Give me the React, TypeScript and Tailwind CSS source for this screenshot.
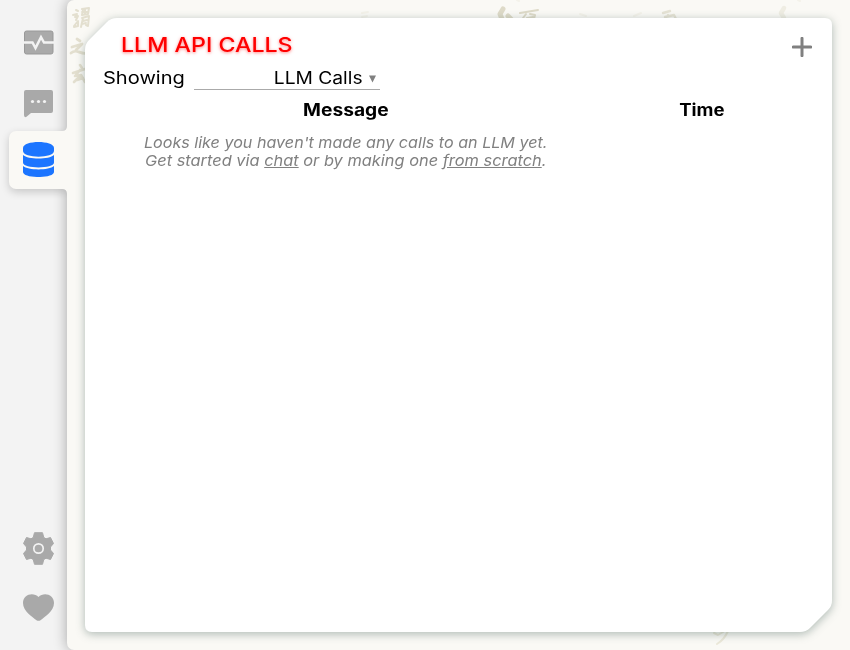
import type { ReactNode } from "react";

function Stretch({ className, children }: { className: string; children: ReactNode }) {
  return <span className={`inline-block whitespace-nowrap ${className}`}>{children}</span>;
}

function Sidebar() {
  return (
    <nav className="flex h-full w-[67px] shrink-0 flex-col text-[#a9a9a9]">
      <div className="flex h-[131px] flex-col pl-[23px] pt-[30px]">
        <svg className="h-[26px] w-[31px]" viewBox="0 0 31 26">
          <rect x="1.5" y="1" width="28.5" height="23" rx="2" fill="#aaa" stroke="#999" />
          <path d="M0 12.5H9.5L12.5 18L18 7.2L21 12.5H31" fill="none" stroke="#f3f3f3" strokeWidth="2.5" />
        </svg>
        <svg className="mt-[34px] h-[28px] w-[31px]" viewBox="0 0 31 28">
          <path d="M3 0H28Q30 0 30 2V21Q30 23 28 23H8L3.5 26.8Q1 28 1 25V2Q1 0 3 0Z" fill="currentColor" />
          <g fill="#f3f3f3"><circle cx="9.5" cy="11.5" r="1.6" /><circle cx="15.5" cy="11.5" r="1.6" /><circle cx="21.5" cy="11.5" r="1.6" /></g>
        </svg>
      </div>
      <div className="relative z-10 ml-[9px] h-[58px] w-[58px]">
        <div className="absolute inset-0 rounded-l-[7px] bg-[#faf9f5] shadow-[0_3px_8px_rgba(0,0,0,0.18)] [clip-path:inset(-12px_0_-14px_-14px)]" />
        <svg className="absolute -top-[5px] right-0 h-[5px] w-[5px]" viewBox="0 0 5 5"><path d="M5 0Q5 5 0 5H5Z" fill="#faf9f5" /></svg>
        <svg className="absolute -bottom-[5px] right-0 h-[5px] w-[5px]" viewBox="0 0 5 5"><path d="M0 0Q5 0 5 5V0Z" fill="#faf9f5" /></svg>
        <svg className="relative ml-[14px] mt-[11px] h-[35px] w-[31px]" viewBox="0 0 31 35" fill="#1c75ff">
          <path d="M0 6C0-2 31-2 31 6V9C31 16.5 0 16.5 0 9Z" />
          <path d="M0 13C5 17.8 26 17.8 31 13V20.5C31 27 0 27 0 20.5Z" />
          <path d="M0 24C5 28.5 26 28.5 31 24V30C31 36.7 0 36.7 0 30Z" />
        </svg>
      </div>
      <div className="mt-auto flex flex-col pb-[29px] pl-[23px]">
        <svg className="h-[33px] w-[31px]" viewBox="0 0 31 33">
          <path d="M11.5 .7H19.5L20.8 5.5L23 6.8L27.5 5.5L30.5 11.5L27.5 15V18L30.5 21.5L27.5 27.5L23 26.2L20.8 27.5L19.5 32.3H11.5L10.2 27.5L8 26.2L3.5 27.5L.5 21.5L3.5 18V15L.5 11.5L3.5 5.5L8 6.8L10.2 5.5Z" fill="currentColor" stroke="currentColor" strokeLinejoin="round" />
          <circle cx="15.5" cy="16.5" r="4.7" fill="#aaa" stroke="#f3f3f3" strokeWidth="1.7" />
        </svg>
        <svg className="mt-[29px] h-[27px] w-[31px]" viewBox="0 0 31 27">
          <path d="M15.5 3C11-2 0-.5 0 9C0 17.5 9.5 23 13.5 26.2Q15.5 27.5 17.5 26.2C21.5 23 31 17.5 31 9C31-.5 20-2 15.5 3Z" fill="currentColor" />
        </svg>
      </div>
    </nav>
  );
}

function Calligraphy() {
  return (
    <svg className="pointer-events-none absolute inset-0 h-full w-full" viewBox="67 0 783 650" fill="none" stroke="#e3dfcf" strokeLinecap="round" strokeLinejoin="round">
      <g strokeWidth="2">
        <path d="M76 10l2 1M73 15l4-1-2 3 3-1-2 4M74 26l4-5v5l-4 1M82 9l7-1-1 6-6 1 1-5M85 9v5M82 12h5M82 18l7-2-1 10-2-1M83 18l-2 9M83 21l4-1M82 24l4-1" />
        <path d="M77 39l3 2M72 47l10-3-6 6M71 53c6-5 9 2 16 0" strokeWidth="2.8" />
        <path d="M80 65l2 3M73 73l12-4M80 70l-5 6 6-1-7 7M81 75l4 7M77 80l6-2" strokeWidth="2.6" />
      </g>
      <g stroke="#dedac8" strokeWidth="2.4">
        <path d="M503 9l-3 5 2 5M508 16l3 3" strokeWidth="5" />
        <path d="M520 13l18-3M526 14l-3 4M530 14l5 1-1 4M527 18l6-1" strokeWidth="2" />
        <path d="M663 13l7-2M665 17l9-2 2 4M668 15l-2 4" stroke="#e6e3d5" />
        <path d="M784 8l-3 5 3 5" stroke="#efede3" strokeWidth="4.5" />
        <path d="M714 633l4 2 5-3M728 631c-3 7-6 10-11 13" stroke="#ebe8d9" strokeWidth="2" />
      </g>
      <path d="M517 0l2 1M798 0l2 1M362 13l6-1M362 17l5-1M580 14l6 2M634 16l7-3" stroke="#f4f2ea" strokeWidth="2" />
    </svg>
  );
}

export default function App() {
  return (
    <div className="flex h-[650px] w-[850px] overflow-hidden bg-[#f3f3f3] font-[Inter,'Noto_Sans',sans-serif] text-black">
      <Sidebar />
      <main className="relative min-w-0 flex-1 rounded-l-[7px] bg-[#faf9f5] p-[18px] shadow-[0_0_14px_rgba(0,0,0,0.32)]">
        <Calligraphy />
        <div className="relative h-[614px] w-[747px] [filter:drop-shadow(0_2px_5px_rgba(35,70,60,0.36))]">
          <section className="h-full w-full bg-white [clip-path:path('M0_32Q0_26_4_22L22_4Q26_0_32_0H740Q747_0_747_7V583Q747_588_743_592L725_610Q721_614_715_614H7Q0_614_0_607Z')]">
            <header className="flex h-[50px] items-start justify-between pl-[36px] pr-5 pt-[15px]">
              <h1 className="h-6 text-[20px] font-medium leading-6 text-[#ff0000] [text-shadow:0_1px_3px_rgba(255,0,0,0.5)]">
                <Stretch className="origin-left scale-x-[1.16]">LLM API CALLS</Stretch>
              </h1>
              <button aria-label="Add call" className="mt-1 h-5 w-5">
                <svg viewBox="0 0 20 20" className="h-5 w-5"><path d="M10 1.3V18.7M1.3 10H18.7" stroke="#808080" strokeWidth="3" strokeLinecap="round" /></svg>
              </button>
            </header>
            <div className="flex h-[22px] pl-[18px] text-[17px] leading-5">
              <div className="w-[91px]"><Stretch className="origin-left scale-x-[1.18]">Showing</Stretch></div>
              <div className="flex w-[186px] justify-end border-b border-[#aaa] pr-[3px]">
                <Stretch className="origin-right scale-x-[1.13]">LLM Calls</Stretch>
                <svg className="ml-[5px] mt-[7px] h-[8px] w-[9px]" viewBox="0 0 9 8"><path d="M1 .5H8L4.5 7.5Z" fill="#808080" /></svg>
              </div>
            </div>
            <div className="flex h-[44px] pt-[10px] text-[17px] font-bold leading-5">
              <div className="w-[521px] text-center"><Stretch className="scale-x-[1.13]">Message</Stretch></div>
              <div className="w-[191px] text-center"><Stretch className="scale-x-[1.09]">Time</Stretch></div>
            </div>
            <p className="w-[521px] text-center text-[15px] italic leading-[18px] text-[#808080]">
              <Stretch className="scale-x-[1.075]">Looks like you haven't made any calls to an LLM yet.</Stretch><br />
              <Stretch className="scale-x-[1.092]">Get started via <a className="underline">chat</a> or by making one <a className="underline">from scratch</a>.</Stretch>
            </p>
          </section>
        </div>
      </main>
    </div>
  );
}
